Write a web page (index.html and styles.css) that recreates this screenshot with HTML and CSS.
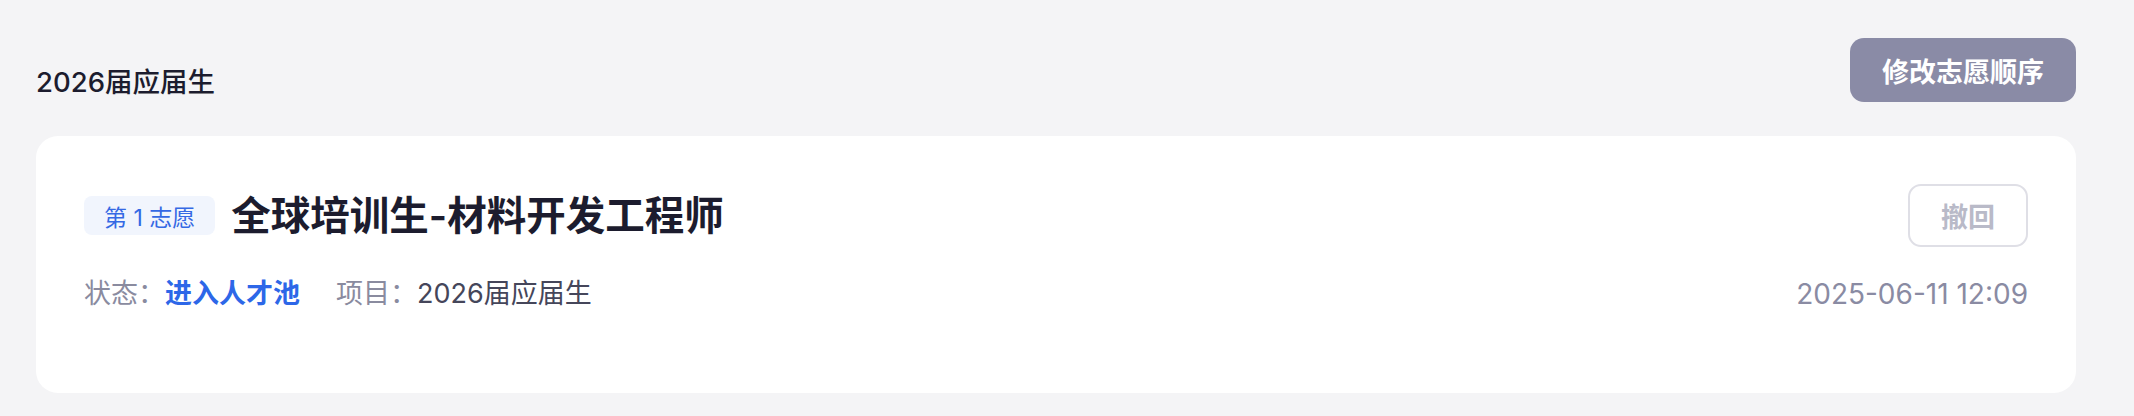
FILE: index.html
```html
<!DOCTYPE html>
<html lang="zh-CN">
<head>
  <meta charset="UTF-8" />
  <meta name="viewport" content="width=device-width, initial-scale=1.0"/>
  <title>我的志愿</title>
  <link rel="stylesheet" href="styles.css">
</head>
<body>
  <div class="page">
    <div class="section-head">
      <h2 class="section-title">2026届应届生</h2>
      <button class="btn-order">修改志愿顺序</button>
    </div>

    <div class="wish-card">
      <div class="wish-row">
        <div class="wish-main">
          <span class="wish-tag">第 1 志愿</span>
          <h3 class="wish-title">全球培训生-材料开发工程师</h3>
        </div>
        <button class="btn-withdraw" disabled>撤回</button>
      </div>

      <div class="wish-row meta-row">
        <div class="wish-meta">
          <span class="meta-item"><span class="meta-label">状态：</span><span class="status">进入人才池</span></span>
          <span class="meta-item"><span class="meta-label">项目：</span><span class="meta-value">2026届应届生</span></span>
        </div>
        <span class="wish-date">2025-06-11 12:09</span>
      </div>
    </div>
  </div>
</body>
</html>
```

FILE: styles.css
```css
body {
  font-family: Inter, "Noto Sans CJK SC", sans-serif;
  background: #f4f4f6;
  margin: 0;
  color: #1c1c2e;
}

.page {
  padding: 38px 58px 0 36px;
}

.section-head {
  display: flex;
  justify-content: space-between;
  align-items: flex-end;
  margin-bottom: 34px;
}

.section-title {
  margin: 0;
  font-size: 27.5px;
  line-height: 40px;
  font-weight: 500;
  color: #1c1c2e;
}

.btn-order {
  height: 64px;
  padding: 0 32px;
  border: none;
  border-radius: 14px;
  background: #8a8ba6;
  color: #fff;
  font-family: inherit;
  font-size: 27px;
  font-weight: 600;
  cursor: pointer;
}

.wish-card {
  background: #fff;
  border-radius: 22px;
  padding: 48px 48px 79px;
}

.wish-row {
  display: flex;
  justify-content: space-between;
  align-items: center;
}

.meta-row {
  margin-top: 27px;
}

.wish-main {
  display: flex;
  align-items: center;
  gap: 16px;
}

.wish-tag {
  display: inline-flex;
  align-items: center;
  height: 39px;
  padding: 0 20px;
  border-radius: 8px;
  background: #f1f5fd;
  color: #3569e4;
  font-size: 23px;
}

.wish-title {
  margin: 0;
  font-size: 39.5px;
  line-height: 60px;
  font-weight: 600;
  color: #1c1c2e;
}

.btn-withdraw {
  height: 63px;
  padding: 0 31px;
  border: 2px solid #dfdfe6;
  border-radius: 13px;
  background: #fff;
  color: #b9bac8;
  font-family: inherit;
  font-size: 27px;
  font-weight: 600;
}

.wish-meta {
  display: flex;
  gap: 36px;
  font-size: 27px;
  line-height: 40px;
}

.meta-label {
  color: #8a8b9f;
}

.status {
  color: #2d67e8;
  font-weight: 600;
}

.meta-value {
  color: #45465a;
}

.wish-date {
  font-size: 28px;
  line-height: 40px;
  color: #8a8ba3;
}
```
